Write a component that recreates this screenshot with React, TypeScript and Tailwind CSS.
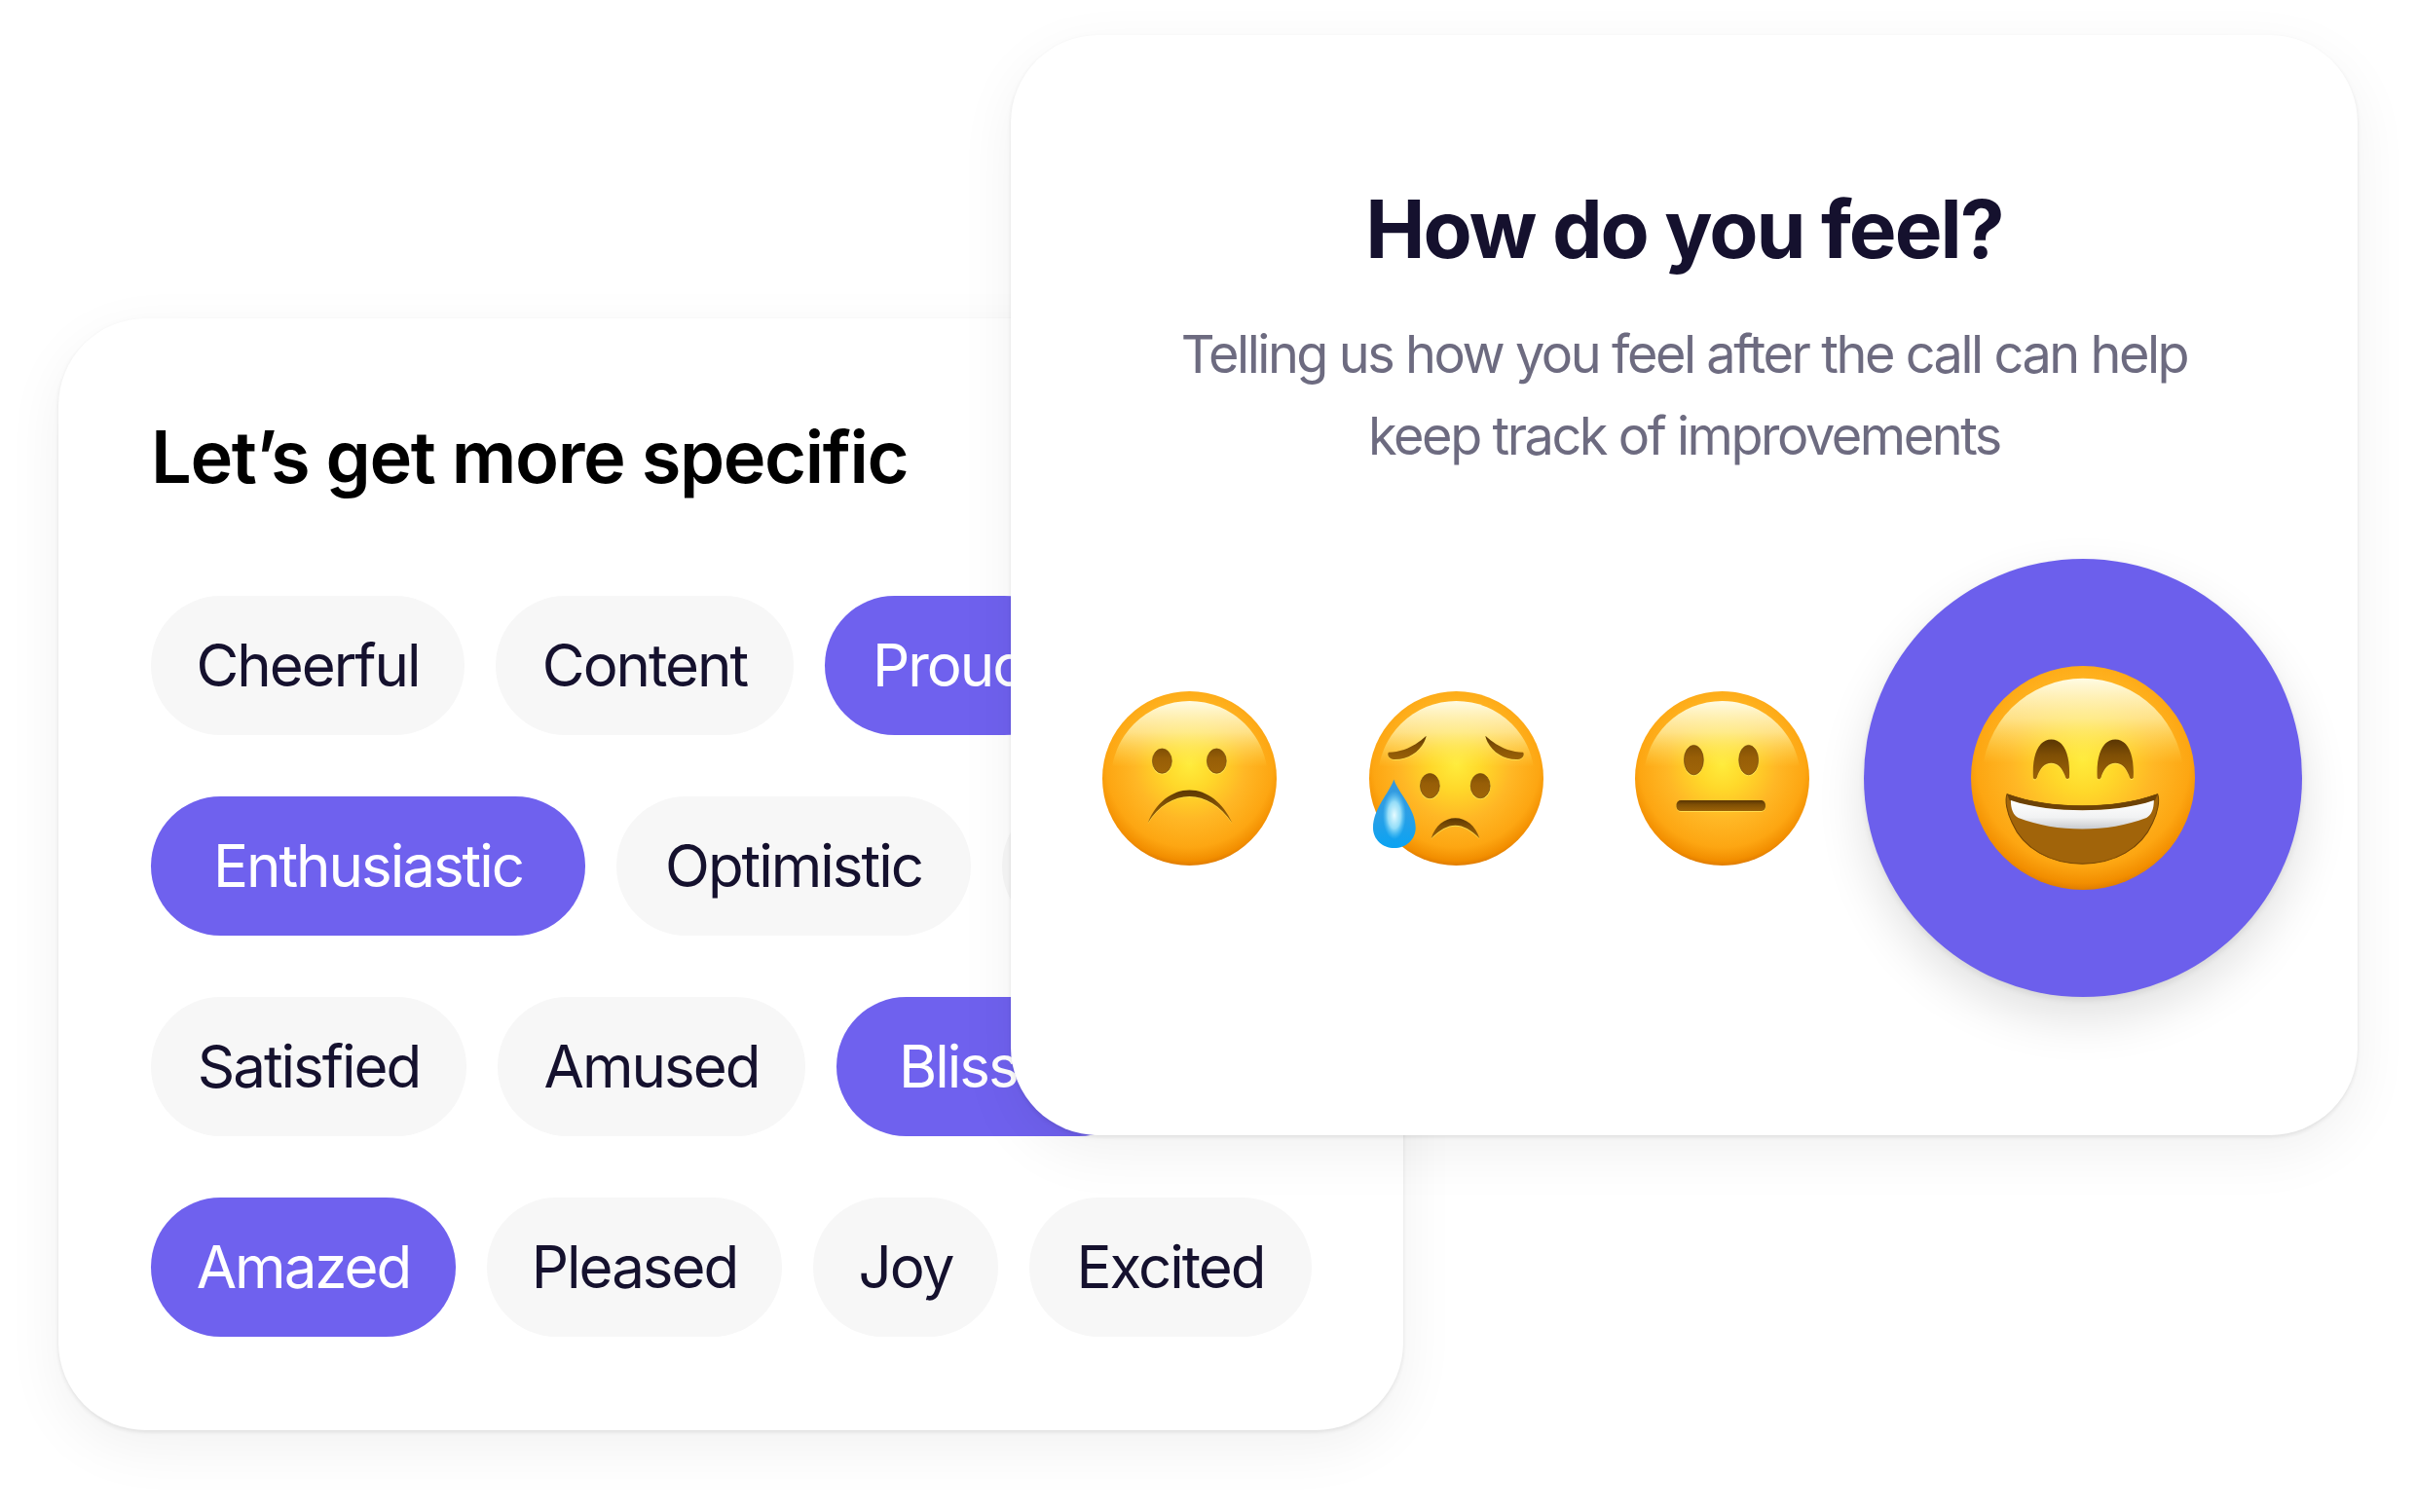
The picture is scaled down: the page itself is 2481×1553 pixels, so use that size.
const inter = "font-['Inter',sans-serif]";

function Pill({ label, width, on }: { label?: string; width: string; on?: boolean }) {
  return (
    <div
      className={`flex h-[143px] shrink-0 items-center justify-center rounded-full pb-[2px] text-[60px] font-normal tracking-[-2px] whitespace-nowrap ${width} ${on ? "bg-[#6f61ee] text-white" : "bg-[#f7f7f7] text-[#15112e]"}`}
    >
      {label}
    </div>
  );
}

function Carved({ d }: { d: string }) {
  return (
    <>
      <path d={d} fill="#ffe85a" opacity="0.8" transform="translate(0 0.9)" />
      <path d={d} fill="url(#carve)" />
    </>
  );
}

function CarvedEye({ cx, cy, rx, ry }: { cx: number; cy: number; rx: number; ry: number }) {
  return (
    <>
      <ellipse cx={cx} cy={cy + 0.8} rx={rx + 0.5} ry={ry + 0.5} fill="#ffe85a" opacity="0.8" />
      <ellipse cx={cx} cy={cy} rx={rx} ry={ry} fill="url(#eye)" stroke="#74480a" strokeWidth="0.7" />
    </>
  );
}

function FaceBase() {
  return (
    <>
      <circle cx="90" cy="90" r="90" fill="url(#skin)" />
      <circle cx="90" cy="91" r="81" fill="url(#gloss)" />
    </>
  );
}

function FaceDefs() {
  return (
    <svg className="absolute h-0 w-0" aria-hidden="true">
      <defs>
        <radialGradient id="skin" cx="0.5" cy="0.42" r="0.58">
          <stop offset="0" stopColor="#ffec3c" />
          <stop offset="0.25" stopColor="#ffd82a" />
          <stop offset="0.55" stopColor="#ffb725" />
          <stop offset="0.82" stopColor="#fda612" />
          <stop offset="0.95" stopColor="#f28e00" />
          <stop offset="1" stopColor="#e07c00" />
        </radialGradient>
        <linearGradient id="gloss" x1="0" y1="0" x2="0" y2="1">
          <stop offset="0" stopColor="#fffde8" stopOpacity="0.98" />
          <stop offset="0.2" stopColor="#fff8b8" stopOpacity="0.68" />
          <stop offset="0.42" stopColor="#fff06a" stopOpacity="0" />
        </linearGradient>
        <linearGradient id="carve" x1="0" y1="0" x2="0" y2="1">
          <stop offset="0" stopColor="#5a3603" />
          <stop offset="0.4" stopColor="#7f4f05" />
          <stop offset="1" stopColor="#9c6207" />
        </linearGradient>
        <linearGradient id="eye" x1="0" y1="0" x2="0" y2="1">
          <stop offset="0" stopColor="#7f4f05" />
          <stop offset="0.4" stopColor="#975e07" />
          <stop offset="1" stopColor="#a06508" />
        </linearGradient>
        <linearGradient id="teeth" x1="0" y1="0" x2="0" y2="1">
          <stop offset="0" stopColor="#ffffff" />
          <stop offset="0.6" stopColor="#f1f2f3" />
          <stop offset="1" stopColor="#c9cbcf" />
        </linearGradient>
        <linearGradient id="tear" x1="0" y1="0" x2="0" y2="1">
          <stop offset="0" stopColor="#3798dc" />
          <stop offset="0.5" stopColor="#2a9fe6" />
          <stop offset="1" stopColor="#0ba3f2" />
        </linearGradient>
        <radialGradient id="tearGlow" cx="0.5" cy="0.5" r="0.5">
          <stop offset="0" stopColor="#e8fcff" />
          <stop offset="0.55" stopColor="#a8e8fb" stopOpacity="0.85" />
          <stop offset="1" stopColor="#6bd0f7" stopOpacity="0" />
        </radialGradient>
      </defs>
    </svg>
  );
}

function FrownFace() {
  return (
    <svg className="h-[179px] w-[179px] shrink-0" viewBox="0 0 180 180">
      <FaceBase />
      <CarvedEye cx={61.7} cy={72} rx={10} ry={12.7} />
      <CarvedEye cx={118} cy={72} rx={10} ry={12.7} />
      <Carved d="M47 136C55 115 72 102 90 102C108 102 125 115 134 136C122 118 106 108.5 90 108.5C74 108.5 58 118 47 136Z" />
    </svg>
  );
}

function TearFace() {
  return (
    <svg className="h-[179px] w-[179px] shrink-0 overflow-visible" viewBox="0 0 180 180">
      <FaceBase />
      <Carved d="M59 46C56 60 42 70.5 27 70.5C21 70.5 18 66 20 63C34 63 47 57 59 46Z" />
      <Carved d="M120 46C123 60 137 70.5 152 70.5C158 70.5 161 66 159 63C145 63 132 57 120 46Z" />
      <CarvedEye cx={62.7} cy={97.7} rx={10} ry={12.7} />
      <CarvedEye cx={114.8} cy={97.7} rx={10} ry={12.7} />
      <Carved d="M64 152C68 139 78 131 89 131C100 131 110 139 114 152C105 143 97 138.5 89 138.5C81 138.5 73 143 64 152Z" />
      <path
        d="M25.5 91C30 105 48 121 48 141C48 153 38 162 26 162C14 162 4 153 4 141C4 121 21 105 25.5 91Z"
        fill="url(#tear)"
      />
      <ellipse cx="26" cy="128" rx="12" ry="25" fill="url(#tearGlow)" />
    </svg>
  );
}

function FlatFace() {
  return (
    <svg className="h-[179px] w-[179px] shrink-0" viewBox="0 0 180 180">
      <FaceBase />
      <CarvedEye cx={60.7} cy={71} rx={10} ry={15.3} />
      <CarvedEye cx={117.3} cy={71} rx={10} ry={15.3} />
      <rect x="42.7" y="113.6" width="92" height="11" rx="4.5" fill="#ffe85a" opacity="0.8" />
      <rect x="42.7" y="112.7" width="92" height="11" rx="4.5" fill="url(#carve)" />
    </svg>
  );
}

function GrinFace() {
  return (
    <svg className="h-[230px] w-[230px]" viewBox="0 0 180 180">
      <FaceBase />
      <Carved d="M50 90C49 72 54 59 64.5 59C75 59 80 72 79 90C77 92 76 90 75.5 88C73 82 70 78 64.5 78C59 78 56 82 53.5 88C53 91 51 92 50 90Z" />
      <Carved d="M101.5 90C100.5 72 105.5 59 116 59C126.5 59 131.5 72 130.5 90C128.5 92 127.5 90 127 88C124.5 82 121.5 78 116 78C110.5 78 107.5 82 105 88C104.5 91 102.5 92 101.5 90Z" />
      <path
        d="M29 103C48 110 70 112.5 89.5 112.5C109 112.5 131 110 150 103C152 108 150 118 146 126C137 147 115 159 89.5 159C64 159 42 147 33 126C29 118 27 108 29 103Z"
        fill="#a1640a"
        stroke="#744505"
        strokeWidth="0.8"
      />
      <path d="M29 103C48 110 70 112.5 89.5 112.5C109 112.5 131 110 150 103L148 108C130 114 109 116 89.5 116C70 116 49 114 31 108Z" fill="#6d4206" />
      <path
        d="M32 108C50 114 70 116 89.5 116C109 116 130 114 147 108C147 115 145 120 141 122C125 128 108 131 89.5 131C71 131 54 128 38 122C34 120 32 115 32 108Z"
        fill="url(#teeth)"
      />
    </svg>
  );
}

function SpecificCard() {
  return (
    <div className="ml-[60px] flex h-[1142px] w-[1381px] flex-col rounded-[90px] bg-white pt-[98px] pl-[95px] shadow-[0_2px_4px_rgba(0,0,0,0.09),0_18px_60px_rgba(0,0,0,0.06)]">
      <h2 className="h-[187px] text-[74px] leading-[88px] font-semibold tracking-[-1.4px] text-black">Let’s get more specific</h2>
      <div className="flex flex-col gap-[63px]">
        <div className="flex gap-8">
          <Pill label="Cheerful" width="w-[322px]" />
          <Pill label="Content" width="w-[306px]" />
          <Pill label="Proud" width="w-[256px]" on />
        </div>
        <div className="flex gap-8">
          <Pill label="Enthusiastic" width="w-[446px]" on />
          <Pill label="Optimistic" width="w-[364px]" />
          <Pill width="w-[200px]" />
        </div>
        <div className="flex gap-8">
          <Pill label="Satisfied" width="w-[324px]" />
          <Pill label="Amused" width="w-[316px]" />
          {/* runs on under the right card, text stays at the left padding */}
          <div className="flex h-[143px] w-[320px] shrink-0 items-center rounded-full bg-[#6f61ee] pb-[2px] pl-16 text-[60px] tracking-[-2px] text-white">Bliss</div>
        </div>
        <div className="flex gap-8">
          <Pill label="Amazed" width="w-[313px]" on />
          <Pill label="Pleased" width="w-[303px]" />
          <Pill label="Joy" width="w-[190px]" />
          <Pill label="Excited" width="w-[290px]" />
        </div>
      </div>
    </div>
  );
}

function FeelCard() {
  return (
    <div className="absolute top-[36px] left-[1038px] flex h-[1130px] w-[1383px] flex-col rounded-[90px] bg-white shadow-[0_2px_4px_rgba(0,0,0,0.09),0_18px_60px_rgba(0,0,0,0.06)]">
      <h1 className="mt-[150px] text-center text-[82px] leading-[100px] font-bold tracking-[-2px] text-[#15112e]">How do you feel?</h1>
      <p className="mt-[36px] text-center text-[54px] leading-[84px] tracking-[-2.45px] text-[#6d6b80]">
        Telling us how you feel after the call can help
        <br />
        keep track of improvements
      </p>
      <div className="mt-[84px] ml-[94px] flex items-center">
        <FrownFace />
        <div className="ml-[95px]">
          <TearFace />
        </div>
        <div className="ml-[94px]">
          <FlatFace />
        </div>
        <div className="ml-[56px] flex h-[450px] w-[450px] items-center justify-center rounded-full bg-[#6c5fec] shadow-[0_3px_6px_rgba(0,0,0,0.08),0_22px_50px_rgba(0,0,0,0.12)]">
          <GrinFace />
        </div>
      </div>
    </div>
  );
}

export default function App() {
  return (
    <div className={`relative h-[1553px] w-[2481px] overflow-hidden bg-white pt-[327px] ${inter}`}>
      <FaceDefs />
      <SpecificCard />
      <FeelCard />
    </div>
  );
}
